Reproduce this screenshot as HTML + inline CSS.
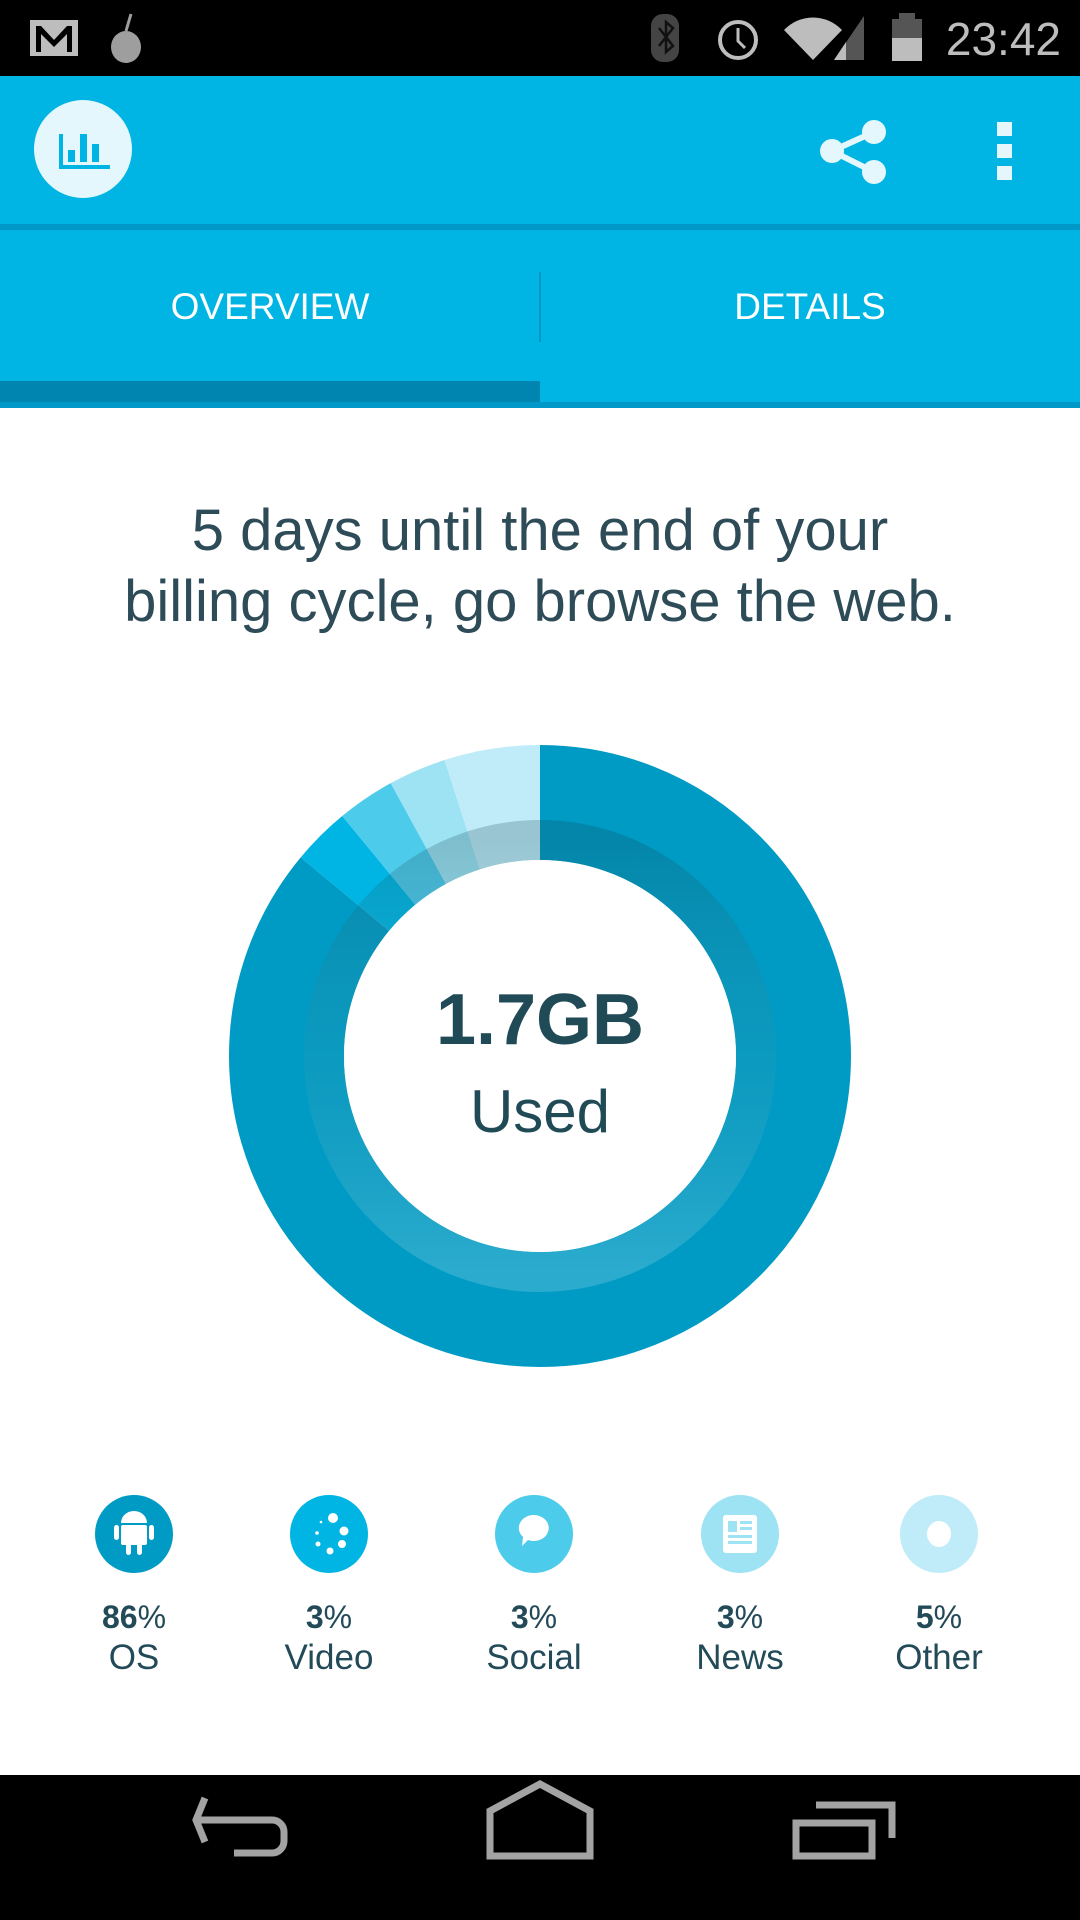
<!DOCTYPE html>
<html><head><meta charset="utf-8"><style>
*{margin:0;padding:0;box-sizing:border-box}
body{width:1080px;height:1920px;position:relative;background:#fff;font-family:"Liberation Sans",sans-serif;overflow:hidden}
.abs{position:absolute}
.txt{color:#234a58}
</style></head><body>
<!-- status bar -->
<div class="abs" style="left:0;top:0;width:1080px;height:76px;background:#000"></div>
<svg class="abs" style="left:0;top:0" width="1080" height="76">
 <rect x="30" y="20" width="48" height="36" fill="#bdbdbd"/>
 <path d="M36 52V26h5l13 14 13-14h5v26h-5V34L54 47 41 34v18z" fill="#000"/>
 <ellipse cx="126" cy="47" rx="15" ry="16" fill="#9e9e9e"/>
 <path d="M126 31l5-17" stroke="#9e9e9e" stroke-width="3"/>
 <rect x="651" y="14" width="28" height="48" rx="12" fill="#444"/>
 <path d="M659 28l14 18-7 6V22l7 6-14 18" stroke="#111" stroke-width="2.5" fill="none"/>
 <circle cx="738" cy="40" r="18" stroke="#bdbdbd" stroke-width="4" fill="none"/>
 <path d="M738 28v13l7 7" stroke="#bdbdbd" stroke-width="3" fill="none"/>
 <path d="M784 30a40 40 0 0 1 58 0l-29 30z" fill="#bdbdbd"/>
 <path d="M834 60l30-44v44z" fill="#555"/>
 <path d="M834 60l12-18v18z" fill="#bdbdbd"/>
 <rect x="892" y="19" width="30" height="42" fill="#555"/><rect x="899" y="13" width="16" height="7" fill="#555"/>
 <rect x="892" y="38" width="30" height="23" fill="#bdbdbd"/>
 <text x="1061" y="55" text-anchor="end" font-size="46" fill="#bdbdbd" font-family="Liberation Sans">23:42</text>
</svg>
<!-- app bar -->
<div class="abs" style="left:0;top:76px;width:1080px;height:148px;background:#00b5e3"></div>
<div class="abs" style="left:0;top:224px;width:1080px;height:6px;background:#0098c9"></div>
<div class="abs" style="left:0;top:230px;width:1080px;height:172px;background:#00b5e3"></div>
<div class="abs" style="left:0;top:381px;width:540px;height:21px;background:#0085b0"></div>
<div class="abs" style="left:0;top:402px;width:1080px;height:6px;background:#0098c9"></div>
<div class="abs" style="left:539px;top:272px;width:2px;height:70px;background:#0098c9"></div>
<svg class="abs" style="left:0;top:76px" width="1080" height="148">
 <circle cx="83" cy="73" r="49" fill="#e4f7fc"/>
 <path d="M61 58v33h49" stroke="#00b5e3" stroke-width="4" fill="none"/>
 <rect x="68" y="74" width="7" height="12" fill="#00b5e3"/>
 <rect x="80" y="58" width="7" height="28" fill="#00b5e3"/>
 <rect x="92" y="68" width="7" height="18" fill="#00b5e3"/>
 <g fill="#e4f7fc"><circle cx="874" cy="56" r="12"/><circle cx="874" cy="96" r="12"/><circle cx="832" cy="75" r="12"/></g>
 <path d="M874 56L832 75L874 96" stroke="#e4f7fc" stroke-width="6" fill="none"/>
 <rect x="997" y="46" width="15" height="14" fill="#e4f7fc"/>
 <rect x="997" y="68" width="15" height="14" fill="#e4f7fc"/>
 <rect x="997" y="90" width="15" height="14" fill="#e4f7fc"/>
</svg>
<div class="abs" style="left:0;top:286px;width:540px;text-align:center;color:#fff;font-size:37px;line-height:42px">OVERVIEW</div>
<div class="abs" style="left:540px;top:286px;width:540px;text-align:center;color:#fff;font-size:37px;line-height:42px">DETAILS</div>
<!-- headline -->
<div class="abs txt" style="left:0;top:495px;width:1080px;text-align:center;font-size:58px;line-height:71px;color:#2e4b58">5 days until the end of your<br>billing cycle, go browse the web.</div>
<!-- donut -->
<svg class="abs" style="left:0;top:0" width="1080" height="1920">
 <defs><linearGradient id="g" x1="0" y1="0" x2="0" y2="1">
  <stop offset="0" stop-color="#0d3a48" stop-opacity="0.22"/>
  <stop offset="0.5" stop-color="#6f8f99" stop-opacity="0.1"/>
  <stop offset="1" stop-color="#ffffff" stop-opacity="0.17"/></linearGradient></defs>
 <g transform="rotate(-90 540 1056)" fill="none" stroke-width="115">
  <circle cx="540" cy="1056" r="253.5" stroke="#009bc4" stroke-dasharray="1370.1 2000"/>
  <circle cx="540" cy="1056" r="253.5" stroke="#00b5e3" stroke-dasharray="0 1370.1 47.8 2000"/>
  <circle cx="540" cy="1056" r="253.5" stroke="#4dcbeb" stroke-dasharray="0 1417.9 47.8 2000"/>
  <circle cx="540" cy="1056" r="253.5" stroke="#9de3f3" stroke-dasharray="0 1465.7 47.8 2000"/>
  <circle cx="540" cy="1056" r="253.5" stroke="#bfecf8" stroke-dasharray="0 1513.5 80 2000"/>
 </g>
 <circle cx="540" cy="1056" r="216" fill="none" stroke="url(#g)" stroke-width="40"/>
 <circle cx="540" cy="1056" r="196" fill="#fff"/>
 <text x="540" y="1044" text-anchor="middle" font-size="72" font-weight="bold" fill="#214a57" font-family="Liberation Sans">1.7GB</text>
 <text x="540" y="1132" text-anchor="middle" font-size="60" fill="#214a57" font-family="Liberation Sans">Used</text>
 <!-- legend -->
 <circle cx="134" cy="1534" r="39" fill="#009bc4"/>
 <g fill="#fff"><path d="M121 1523a13 12 0 0 1 26 0z"/><rect x="121" y="1525" width="26" height="20" rx="2"/><rect x="114" y="1525" width="5" height="15" rx="2.5"/><rect x="149" y="1525" width="5" height="15" rx="2.5"/><rect x="126" y="1543" width="5" height="12" rx="2.5"/><rect x="137" y="1543" width="5" height="12" rx="2.5"/></g>
 <circle cx="329" cy="1534" r="39" fill="#00b5e3"/>
 <g fill="#fff"><circle cx="333" cy="1518" r="5"/><circle cx="344" cy="1531" r="4.5"/><circle cx="342" cy="1544" r="4"/><circle cx="330" cy="1551" r="3.5"/><circle cx="318" cy="1544" r="2.5"/><circle cx="317" cy="1533" r="1.8"/><circle cx="321" cy="1522" r="1.3"/></g>
 <circle cx="534" cy="1534" r="39" fill="#4dcbeb"/>
 <path d="M534 1515a15 13 0 1 1-6 25l-6 6 1-9a15 13 0 0 1 11-22z" fill="#fff"/>
 <circle cx="740" cy="1534" r="39" fill="#9de3f3"/>
 <rect x="723" y="1515" width="34" height="38" rx="3" fill="#fff"/>
 <g fill="#9de3f3"><rect x="728" y="1521" width="9" height="11"/><rect x="740" y="1521" width="12" height="3"/><rect x="740" y="1527" width="12" height="3"/><rect x="728" y="1535" width="24" height="3"/><rect x="728" y="1541" width="24" height="3"/></g>
 <circle cx="939" cy="1534" r="39" fill="#bfecf8"/>
 <ellipse cx="939" cy="1534" rx="12" ry="13" fill="#fff"/>
 <g font-family="Liberation Sans" fill="#234a58" text-anchor="middle">
  <text x="134" y="1628" font-size="32" font-weight="bold">86<tspan font-weight="normal">%</tspan></text>
  <text x="329" y="1628" font-size="32" font-weight="bold">3<tspan font-weight="normal">%</tspan></text>
  <text x="534" y="1628" font-size="32" font-weight="bold">3<tspan font-weight="normal">%</tspan></text>
  <text x="740" y="1628" font-size="32" font-weight="bold">3<tspan font-weight="normal">%</tspan></text>
  <text x="939" y="1628" font-size="32" font-weight="bold">5<tspan font-weight="normal">%</tspan></text>
  <text x="134" y="1669" font-size="35">OS</text>
  <text x="329" y="1669" font-size="35">Video</text>
  <text x="534" y="1669" font-size="35">Social</text>
  <text x="740" y="1669" font-size="35">News</text>
  <text x="939" y="1669" font-size="35">Other</text>
 </g>
 <!-- nav bar -->
 <rect x="0" y="1775" width="1080" height="145" fill="#000"/>
 <g stroke="#a3a3a3" stroke-width="7" fill="none">
  <path d="M205 1798l-9 22 9 22"/>
  <path d="M196 1820h76a12 12 0 0 1 12 12v9a12 12 0 0 1-12 12h-38"/>
  <path d="M490 1856v-45l50-27 50 27v45z"/>
  <path d="M796 1823h76v33h-76z"/>
  <path d="M816 1805h76v33"/>
 </g>
</svg>
</body></html>
